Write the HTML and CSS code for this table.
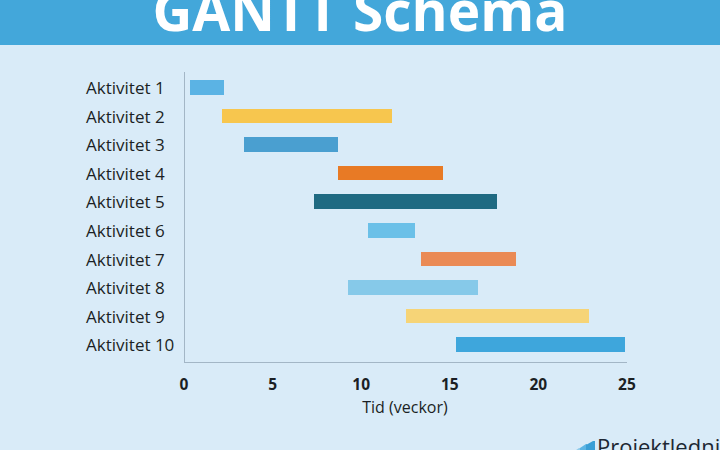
FILE: index.html
```html
<!DOCTYPE html>
<html lang="sv">
<head>
<meta charset="utf-8">
<title>GANTT Schema</title>
<link rel="stylesheet" href="styles.css">
</head>
<body>
<header class="banner">
  <h1 class="title">GANTT Schema</h1>
</header>
<main class="chart">
  <div class="chart-body">
    <ul class="labels">
      <li>Aktivitet 1</li>
      <li>Aktivitet 2</li>
      <li>Aktivitet 3</li>
      <li>Aktivitet 4</li>
      <li>Aktivitet 5</li>
      <li>Aktivitet 6</li>
      <li>Aktivitet 7</li>
      <li>Aktivitet 8</li>
      <li>Aktivitet 9</li>
      <li>Aktivitet 10</li>
    </ul>
    <div class="plot">
      <div class="row"><span class="bar c1" style="margin-left:5px;width:34px"></span></div>
      <div class="row"><span class="bar c2" style="margin-left:37px;width:170px"></span></div>
      <div class="row"><span class="bar c3" style="margin-left:59px;width:94px"></span></div>
      <div class="row"><span class="bar c4" style="margin-left:153px;width:105px"></span></div>
      <div class="row"><span class="bar c5" style="margin-left:129px;width:183px"></span></div>
      <div class="row"><span class="bar c6" style="margin-left:183px;width:47px"></span></div>
      <div class="row"><span class="bar c7" style="margin-left:236px;width:95px"></span></div>
      <div class="row"><span class="bar c8" style="margin-left:163px;width:130px"></span></div>
      <div class="row"><span class="bar c9" style="margin-left:221px;width:183px"></span></div>
      <div class="row"><span class="bar c10" style="margin-left:271px;width:169px"></span></div>
    </div>
  </div>
  <div class="ticks">
    <span>0</span><span>5</span><span>10</span><span>15</span><span>20</span><span>25</span>
  </div>
  <div class="axis-title">Tid (veckor)</div>
</main>
<footer class="brand">
  <svg class="brand-icon" viewBox="0 0 23 12" width="23" height="12" aria-hidden="true">
    <polygon points="0,12 7,7 9,7 9,12" fill="#8fcbeb"/>
    <polygon points="8,12 8,7 14,3 15,3 15,12" fill="#5db5e4"/>
    <polygon points="14,12 14,4 21,0 23,0 23,12" fill="#3a9fd6"/>
  </svg>
  <span class="brand-name">Projektledning.se</span>
</footer>
</body>
</html>
```

FILE: styles.css
```css
* { box-sizing: border-box; }

html, body {
  margin: 0;
  padding: 0;
}

body {
  width: 720px;
  height: 450px;
  overflow: hidden;
  background: #d9ebf8;
  font-family: "Open Sans", "Noto Sans", sans-serif;
  color: #1b1f24;
}

.banner {
  height: 45px;
  background: #43a7da;
  overflow: hidden;
  display: flex;
  justify-content: center;
}

.title {
  margin: -13px 0 0;
  font-size: 55px;
  line-height: 45px;
  font-weight: 700;
  color: #ffffff;
  letter-spacing: 0;
  white-space: nowrap;
}

.chart {
  padding-top: 27px;
}

.chart-body {
  display: flex;
}

.labels {
  list-style: none;
  margin: 0;
  padding: 2px 0 0 86px;
  width: 184px;
}

.labels li {
  height: 28.6px;
  line-height: 28.6px;
  font-size: 17px;
  white-space: nowrap;
}

.plot {
  width: 443px;
  height: 291px;
  border-left: 1px solid #a3b6c6;
  border-bottom: 1px solid #a3b6c6;
  padding-top: 1px;
}

.row {
  height: 28.6px;
  display: flex;
  align-items: center;
}

.bar {
  display: block;
  height: 14.6px;
}

.c1 { background: #5bb3e4; }
.c2 { background: #f7c64e; }
.c3 { background: #4a9fd0; }
.c4 { background: #e87a25; }
.c5 { background: #1f6a82; }
.c6 { background: #6bc0e8; }
.c7 { background: #ea8a55; }
.c8 { background: #86c9e9; }
.c9 { background: #f6d477; }
.c10 { background: #3ea6dc; }

.ticks {
  display: flex;
  justify-content: space-between;
  margin: 12px 0 0 169px;
  width: 473px;
}

.ticks span {
  width: 30px;
  text-align: center;
  font-size: 15.5px;
  line-height: 18px;
  font-weight: 700;
}

.axis-title {
  margin: 5px 0 0 184px;
  width: 442px;
  text-align: center;
  font-size: 16px;
  line-height: 19px;
}

.brand {
  display: flex;
  align-items: flex-start;
  gap: 2px;
  padding-left: 572px;
  margin-top: 16px;
  white-space: nowrap;
}

.brand-icon {
  flex: none;
  margin-top: 8px;
}

.brand-name {
  font-size: 22px;
  line-height: 26px;
  color: #1d2733;
}
```
